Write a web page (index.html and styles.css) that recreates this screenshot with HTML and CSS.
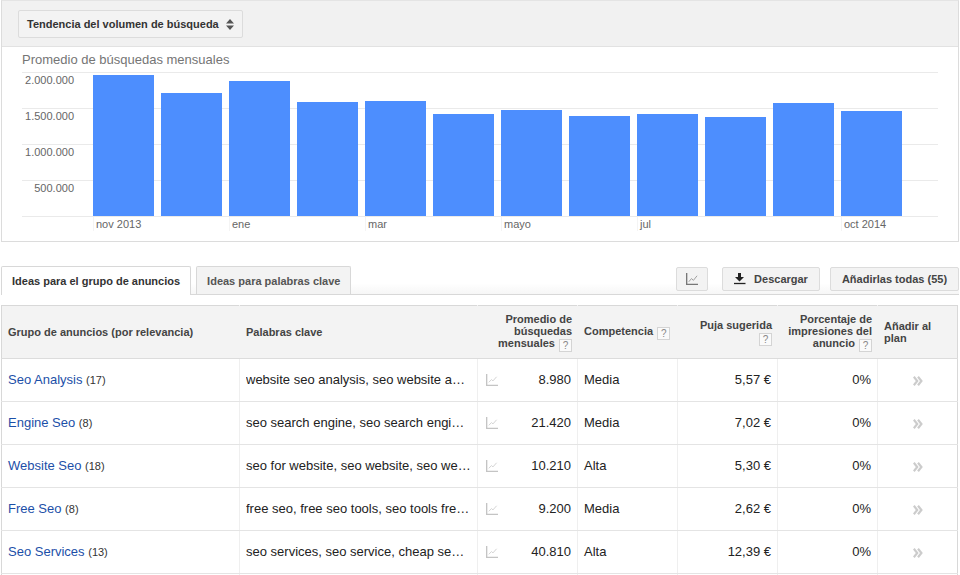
FILE: index.html
```html
<!DOCTYPE html>
<html lang="es">
<head>
<meta charset="utf-8">
<title>Planificador de palabras clave</title>
<link rel="stylesheet" href="styles.css">
</head>
<body>
<section class="panel">
  <div class="panel-head">
    <button class="select">Tendencia del volumen de búsqueda
      <svg class="updown" width="8" height="11" viewBox="0 0 8 11"><path d="M4 0 8 4.500H0zM0 6.500h8L4 11z" fill="#555"/></svg>
    </button>
  </div>
  <div class="chart">
    <h2 class="chart-title">Promedio de búsquedas mensuales</h2>
    <div class="plot">
      <div class="grid-lines"><i></i><i></i><i></i><i></i><i></i></div>
      <div class="y-labels"><span>2.000.000</span><span>1.500.000</span><span>1.000.000</span><span>500.000</span></div>
      <div class="bars">
        <div class="bar" style="height:141px"></div>
        <div class="bar" style="height:123px"></div>
        <div class="bar" style="height:135px"></div>
        <div class="bar" style="height:114px"></div>
        <div class="bar" style="height:115px"></div>
        <div class="bar" style="height:102px"></div>
        <div class="bar" style="height:106px"></div>
        <div class="bar" style="height:100px"></div>
        <div class="bar" style="height:102px"></div>
        <div class="bar" style="height:99px"></div>
        <div class="bar" style="height:113px"></div>
        <div class="bar" style="height:105px"></div>
      </div>
    </div>
    <div class="x-labels">
      <span class="x2">nov 2013</span><span class="x2">ene</span><span class="x2">mar</span><span class="x2">mayo</span><span class="x3">jul</span><span class="x1">oct 2014</span>
    </div>
  </div>
</section>

<nav class="toolbar">
  <div class="tabs">
    <a class="tab active">Ideas para el grupo de anuncios</a>
    <a class="tab">Ideas para palabras clave</a>
  </div>
  <div class="actions">
    <button class="btn btn-icon"><svg width="12" height="12" viewBox="0 0 13 13"><path d="M.7 0v12.300H13" fill="none" stroke="#777" stroke-width="1.500"/><path d="M3 9.500 6 6 8 8l4-5" fill="none" stroke="#999" stroke-width="1"/></svg></button>
    <button class="btn btn-down"><svg width="12" height="12" viewBox="0 0 12 12"><path d="M4 0h3v4h3L5.500 8.500 1 4h3z" fill="#222"/><path d="M0 10.500h11.500" stroke="#222" stroke-width="1.300"/></svg>Descargar</button>
    <button class="btn btn-add">Añadirlas todas (55)</button>
  </div>
</nav>

<table class="ideas">
  <colgroup>
    <col class="w-group"><col class="w-kw"><col class="w-trend"><col class="w-num"><col class="w-col"><col class="w-col"><col class="w-col"><col>
  </colgroup>
  <thead>
    <tr>
      <th>Grupo de anuncios (por relevancia)</th>
      <th>Palabras clave</th>
      <th class="r" colspan="2">Promedio de<br>búsquedas<br>mensuales <span class="help">?</span></th>
      <th>Competencia <span class="help">?</span></th>
      <th class="r">Puja sugerida<br><span class="help">?</span></th>
      <th class="r">Porcentaje de<br>impresiones del<br>anuncio <span class="help">?</span></th>
      <th>Añadir al<br>plan</th>
    </tr>
  </thead>
  <tbody>
    <tr>
      <td><a class="group">Seo Analysis</a> <small>(17)</small></td>
      <td><div class="kw">website seo analysis, seo website analysis, website analysis</div></td>
      <td class="trend"><svg class="spark" width="12" height="12" viewBox="0 0 13 13"><path d="M.7 0v12.300H13" fill="none" stroke="#c4c4c4" stroke-width="1.500"/><path d="M3 9 6 6l1.500 1.500L11.500 3" fill="none" stroke="#d0d0d0"/></svg></td>
      <td class="r num">8.980</td><td>Media</td><td class="r">5,57 €</td><td class="r">0%</td>
      <td class="add"><svg width="10" height="10" viewBox="0 0 10 10"><path d="M.8.800l3.400 4.200L.8 9.200M5 .8l3.400 4.200L5 9.200" fill="none" stroke="#ccc" stroke-width="2.200"/></svg></td>
    </tr>
    <tr>
      <td><a class="group">Engine Seo</a> <small>(8)</small></td>
      <td><div class="kw">seo search engine, seo search engine optimization, engine seo</div></td>
      <td class="trend"><svg class="spark" width="12" height="12" viewBox="0 0 13 13"><path d="M.7 0v12.300H13" fill="none" stroke="#c4c4c4" stroke-width="1.500"/><path d="M3 9 6 6l1.500 1.500L11.500 3" fill="none" stroke="#d0d0d0"/></svg></td>
      <td class="r num">21.420</td><td>Media</td><td class="r">7,02 €</td><td class="r">0%</td>
      <td class="add"><svg width="10" height="10" viewBox="0 0 10 10"><path d="M.8.800l3.400 4.200L.8 9.200M5 .8l3.400 4.200L5 9.200" fill="none" stroke="#ccc" stroke-width="2.200"/></svg></td>
    </tr>
    <tr>
      <td><a class="group">Website Seo</a> <small>(18)</small></td>
      <td><div class="kw">seo for website, seo website, seo website optimization</div></td>
      <td class="trend"><svg class="spark" width="12" height="12" viewBox="0 0 13 13"><path d="M.7 0v12.300H13" fill="none" stroke="#c4c4c4" stroke-width="1.500"/><path d="M3 9 6 6l1.500 1.500L11.500 3" fill="none" stroke="#d0d0d0"/></svg></td>
      <td class="r num">10.210</td><td>Alta</td><td class="r">5,30 €</td><td class="r">0%</td>
      <td class="add"><svg width="10" height="10" viewBox="0 0 10 10"><path d="M.8.800l3.400 4.200L.8 9.200M5 .8l3.400 4.200L5 9.200" fill="none" stroke="#ccc" stroke-width="2.200"/></svg></td>
    </tr>
    <tr>
      <td><a class="group">Free Seo</a> <small>(8)</small></td>
      <td><div class="kw">free seo, free seo tools, seo tools free, free seo analysis</div></td>
      <td class="trend"><svg class="spark" width="12" height="12" viewBox="0 0 13 13"><path d="M.7 0v12.300H13" fill="none" stroke="#c4c4c4" stroke-width="1.500"/><path d="M3 9 6 6l1.500 1.500L11.500 3" fill="none" stroke="#d0d0d0"/></svg></td>
      <td class="r num">9.200</td><td>Media</td><td class="r">2,62 €</td><td class="r">0%</td>
      <td class="add"><svg width="10" height="10" viewBox="0 0 10 10"><path d="M.8.800l3.400 4.200L.8 9.200M5 .8l3.400 4.200L5 9.200" fill="none" stroke="#ccc" stroke-width="2.200"/></svg></td>
    </tr>
    <tr>
      <td><a class="group">Seo Services</a> <small>(13)</small></td>
      <td><div class="kw">seo services, seo service, cheap seo services, best seo</div></td>
      <td class="trend"><svg class="spark" width="12" height="12" viewBox="0 0 13 13"><path d="M.7 0v12.300H13" fill="none" stroke="#c4c4c4" stroke-width="1.500"/><path d="M3 9 6 6l1.500 1.500L11.500 3" fill="none" stroke="#d0d0d0"/></svg></td>
      <td class="r num">40.810</td><td>Alta</td><td class="r">12,39 €</td><td class="r">0%</td>
      <td class="add"><svg width="10" height="10" viewBox="0 0 10 10"><path d="M.8.800l3.400 4.200L.8 9.200M5 .8l3.400 4.200L5 9.200" fill="none" stroke="#ccc" stroke-width="2.200"/></svg></td>
    </tr>
    <tr>
      <td></td><td></td><td class="trend"></td><td></td><td></td><td></td><td></td><td></td>
    </tr>
  </tbody>
</table>
</body>
</html>
```
FILE: styles.css
```css
* { box-sizing: border-box; }
html, body { height: 575px; overflow: hidden; }
body {
  margin: 0;
  padding: 0 1px;
  background: #fff;
  font-family: "Liberation Sans", Arial, sans-serif;
  color: #222;
}
.panel {
  height: 242px;
  border: 1px solid #dcdcdc;
  border-top-color: #e4e4e4;
}
.panel-head {
  height: 46px;
  padding-top: 9px;
  padding-left: 16px;
  background: #f1f1f1;
  border-bottom: 1px solid #e2e2e2;
}
.select {
  display: flex;
  align-items: center;
  gap: 7px;
  height: 28px;
  padding: 0 8px;
  background: #f3f3f3;
  border: 1px solid #dcdcdc;
  border-radius: 2px;
  font: bold 11px "Liberation Sans", Arial, sans-serif;
  color: #333;
}
.chart {
  padding: 4px 20px 0;
}
.chart-title {
  margin: 0;
  height: 21px;
  font-size: 13px;
  line-height: 17px;
  font-weight: normal;
  color: #757575;
}
.plot {
  position: relative;
  height: 145px;
}
.grid-lines {
  position: absolute;
  inset: 0;
  display: flex;
  flex-direction: column;
}
.grid-lines i {
  display: block;
  height: 36px;
  border-top: 1px solid #eaeaea;
}
.grid-lines i:last-child { height: 1px; }
.y-labels {
  position: absolute;
  left: 0;
  top: 1px;
  width: 52px;
  display: flex;
  flex-direction: column;
  gap: 22px;
  text-align: right;
  font-size: 11px;
  line-height: 14px;
  color: #666;
}
.bars {
  position: absolute;
  left: 71px;
  bottom: 1px;
  height: 144px;
  display: flex;
  align-items: flex-end;
  gap: 7px;
}
.bar {
  width: 61px;
  background: #4d8efe;
}
.x-labels {
  display: flex;
  padding-left: 71px;
  font-size: 11px;
  line-height: 14px;
  color: #666;
}
.x-labels span {
  border-left: 1px solid #f4f4f4;
  padding-left: 2px;
  height: 14px;
}
.x2 { width: 136px; }
.x3 { width: 204px; }
.toolbar {
  display: flex;
  justify-content: space-between;
  align-items: flex-end;
  margin-top: 25px;
  height: 28px;
  border-bottom: 1px solid #d8d8d8;
  background: linear-gradient(#fff 60%, #f6f6f6);
}
.tabs { display: flex; gap: 5px; }
.tab {
  height: 28px;
  padding: 0 10px;
  background: #f3f3f3;
  border: 1px solid #d8d8d8;
  border-bottom: none;
  border-radius: 2px 2px 0 0;
  font-weight: bold;
  font-size: 11px;
  line-height: 28px;
  color: #555;
}
.tab.active {
  background: #fff;
  color: #333;
  height: 29px;
  margin-bottom: -1px;
}
.actions {
  display: flex;
  align-self: flex-start;
  margin-right: 0;
}
.btn {
  height: 24px;
  display: flex;
  align-items: center;
  justify-content: center;
  background: #f3f3f3;
  border: 1px solid #dcdcdc;
  border-radius: 2px;
  font: bold 11px "Liberation Sans", Arial, sans-serif;
  color: #444;
  padding: 0;
}
.btn-icon { width: 32px; }
.btn-down { width: 98px; gap: 8px; margin-left: 14px; }
.btn-add { width: 129px; margin-left: 10px; }
.ideas {
  margin-top: 10px;
  width: 957px;
  table-layout: fixed;
  border-collapse: collapse;
  border: 1px solid #d8d8d8;
  border-bottom: none;
  font-size: 13px;
}
.w-group { width: 238px; }
.w-kw { width: 238px; }
.w-trend { width: 30px; }
.w-num { width: 70px; }
.w-col { width: 100px; }
.ideas th {
  height: 53px;
  padding: 0 6px;
  background: #f3f3f3;
  border-bottom: 1px solid #dcdcdc;
  border-right: 1px solid #f3f3f3;
  text-align: left;
  font-size: 11px;
  line-height: 12px;
  color: #444;
}
.ideas th:last-child { border-right: none; }
.ideas th.r { text-align: right; padding-right: 5px; }
.ideas td {
  height: 43px;
  padding: 0 6px 2px;
  border-bottom: 1px solid #e4e4e4;
  border-right: 1px solid #efefef;
  white-space: nowrap;
}
.ideas td:last-child { border-right: none; }
.ideas td.r { text-align: right; }
.ideas td.num { padding-left: 0; }
.ideas td.trend {
  padding: 0 0 0 8px;
  border-right: none;
}
.spark { display: block; }
.kw {
  overflow: hidden;
  text-overflow: ellipsis;
  white-space: nowrap;
}
.group { color: #1c4fa8; }
small { font-size: 11px; color: #333; }
.help {
  display: inline-block;
  width: 13px;
  height: 13px;
  margin-left: 1px;
  border: 1px solid #d4d4d4;
  background: #fafafa;
  text-align: center;
  font-weight: normal;
  font-size: 10px;
  line-height: 11px;
  color: #888;
  vertical-align: -2px;
}
.ideas td.add {
  padding: 2px 0 0;
  text-align: center;
}
```
